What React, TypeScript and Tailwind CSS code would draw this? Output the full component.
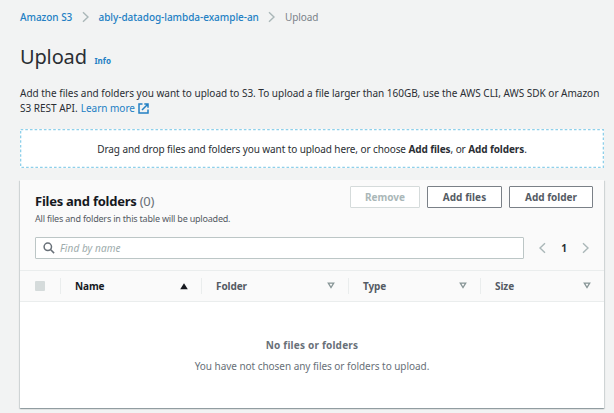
import React from "react";

function Chevron({ className, left = false }: { className: string; left?: boolean }) {
  return (
    <svg className={className} width="7" height="12" viewBox="0 0 7 12" fill="none" stroke="currentColor" strokeWidth="1.4">
      <path d={left ? "M6 1.2 1 6l5 4.8" : "m1 1.2 5 4.8-5 4.8"} />
    </svg>
  );
}

function SortIcon({ active = false }: { active?: boolean }) {
  return active ? (
    <svg className="text-[#16191f]" width="8" height="7" viewBox="0 0 8 7" fill="currentColor">
      <path d="M4 .2 7.8 6.2H.2Z" />
    </svg>
  ) : (
    <svg className="mb-px text-[#879596]" width="8" height="7" viewBox="0 0 8 7" fill="none" stroke="currentColor" strokeWidth="1.3">
      <path d="M1.3 1.2h5.4L4 5.6Z" />
    </svg>
  );
}

function Column({ label, width, active = false }: { label: string; width: string; active?: boolean }) {
  return (
    <div className={`flex h-4 items-center justify-between border-l border-[#eaeded] pr-[13px] pl-[14px] ${width} ${active ? "text-[#16191f]" : "text-[#545b64]"}`}>
      <span className="font-bold tracking-[-0.01em]">{label}</span>
      <SortIcon active={active} />
    </div>
  );
}

export default function App() {
  return (
    <main className="h-[413px] w-[614px] overflow-hidden bg-[#f2f3f3] pr-[10px] pl-5 font-['Noto_Sans',sans-serif] text-[10px] leading-[15px] text-[#2a2e33]">
      <nav className="flex h-[34px] items-center text-[#2380c4]">
        <a className="w-[52px] font-medium tracking-[-0.05px] whitespace-nowrap">Amazon S3</a>
        <Chevron className="ml-[10px] text-[#aab7b8]" />
        <a className="ml-[9.5px] w-[160.5px] font-medium tracking-[-0.04px] whitespace-nowrap">ably-datadog-lambda-example-an</a>
        <Chevron className="ml-[9px] text-[#aab7b8]" />
        <span className="ml-[10px] tracking-[-0.1px] text-[#7b8289]">Upload</span>
      </nav>

      <header className="flex h-[52px] items-baseline pt-[9px]">
        <h1 className="w-[67px] text-[20px] leading-[28px] tracking-[-0.15px]">Upload</h1>
        <a className="ml-[7.5px] text-[8px] font-bold text-[#2380c4]">Info</a>
      </header>

      <p className="h-[43px] tracking-[-0.012px] whitespace-nowrap">
        Add the files and folders you want to upload to S3. To upload a file larger than 160GB, use the AWS CLI, AWS SDK or Amazon
        <br />
        S3 REST API.{" "}
        <a className="ml-[0.5px] text-[#2380c4]">
          Learn more
          <svg className="ml-[3px] inline-block align-[-2px]" width="11" height="11" viewBox="0 0 11 11" fill="none" stroke="currentColor" strokeWidth="1.5">
            <path d="M4.5 1H1v9h9V6.5M6.3 1H10v3.7M10 1 4 7" />
          </svg>
        </a>
      </p>

      <section className="relative flex h-[39px] items-center justify-center bg-white whitespace-nowrap">
        <svg className="absolute inset-0 text-[#8ed0ea]" width="584" height="39" fill="none" stroke="currentColor" strokeWidth="1.3">
          <rect x=".65" y=".65" width="582.7" height="37.7" strokeDasharray="2.6 2.05" />
        </svg>
        <p className="pt-px tracking-[-0.095px]">
          Drag and drop files and folders you want to upload here, or choose <b>Add files</b>, or <b>Add folders</b>.
        </p>
      </section>

      <section className="mt-[12px] flex h-[228px] flex-col bg-white shadow-[0_1px_1px_0_rgba(0,28,36,.25),1px_1px_1px_0_rgba(0,28,36,.1),-1px_1px_1px_0_rgba(0,28,36,.1)]">
        <div className="h-[90px] bg-[#fafafa] px-[15px]">
          <div className="flex justify-between">
            <div className="pt-[12px]">
              <h2 className="text-[13px] leading-[18px] font-bold tracking-[-0.25px] whitespace-nowrap text-[#16191f]">
                Files and folders <span className="font-normal text-[#687078]">(0)</span>
              </h2>
              <p className="mt-[2px] text-[9px] leading-[13px] tracking-[-0.2px] whitespace-nowrap text-[#545b64]">All files and folders in this table will be uploaded.</p>
            </div>
            <div className="mr-[-4px] flex gap-[7px] pt-[6px] font-bold text-[#545b64]">
              <button className="h-[22px] w-[70px] rounded-[1px] border border-[#d5dbdb] bg-white text-[#aab7b8]">Remove</button>
              <button className="h-[22px] w-[75px] rounded-[1px] border border-[#7a8087] bg-white tracking-[0.05px]">Add files</button>
              <button className="h-[22px] w-[84px] rounded-[1px] border border-[#7a8087] bg-white">Add folder</button>
            </div>
          </div>
          <div className="mt-[12px] flex items-center">
            <div className="flex h-[22px] w-[489px] items-center rounded-[1px] border border-[#bcc6c6] bg-white pl-[7px]">
              <svg className="text-[#687078]" width="12" height="12" viewBox="0 0 12 12" fill="none" stroke="currentColor" strokeWidth="1.5">
                <circle cx="4.8" cy="4.8" r="3.7" />
                <path d="m7.5 7.5 3.6 3.6" />
              </svg>
              <span className="ml-[5px] tracking-[0.08px] text-[#9dabac] italic">Find by name</span>
            </div>
            <Chevron left className="ml-[15px] text-[#aab7b8]" />
            <span className="w-[36px] text-center font-bold">1</span>
            <Chevron className="text-[#aab7b8]" />
          </div>
        </div>
        <div className="flex h-[32px] items-center border-y border-[#eaeded] bg-[#fafafa] pl-[15px]">
          <span className="mr-[15px] h-[10px] w-[10px] rounded-[1px] bg-[#d5dbdb]" />
          <Column label="Name" width="w-[141px]" active />
          <Column label="Folder" width="w-[147px]" />
          <Column label="Type" width="w-[132px]" />
          <Column label="Size" width="w-[124px]" />
        </div>
        <div className="pt-[36px] text-center text-[#687078]">
          <p className="font-bold tracking-[0.2px]">No files or folders</p>
          <p className="mt-[6px] tracking-[-0.04px]">You have not chosen any files or folders to upload.</p>
        </div>
      </section>
    </main>
  );
}
